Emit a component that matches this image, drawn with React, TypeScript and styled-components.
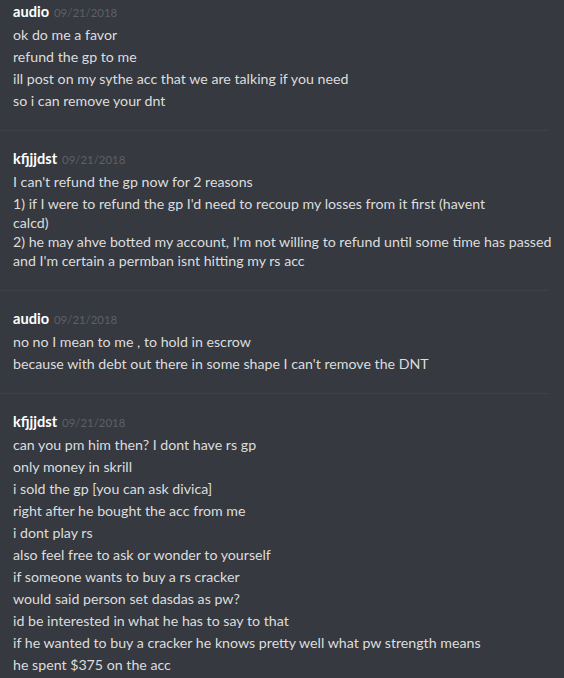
import React from 'react';
import styled, { createGlobalStyle } from 'styled-components';

type Group = {
  author: string;
  time: string;
  messages: string[];
};

const groups: Group[] = [
  {
    author: 'audio',
    time: '09/21/2018',
    messages: [
      'ok do me a favor',
      'refund the gp to me',
      'ill post on my sythe acc that we are talking if you need',
      'so i can remove your dnt',
    ],
  },
  {
    author: 'kfjjjdst',
    time: '09/21/2018',
    messages: [
      "I can't refund the gp now for 2 reasons",
      "1) if I were to refund the gp I'd need to recoup my losses from it first (havent\ncalcd)\n2) he may ahve botted my account, I'm not willing to refund until some time has passed\nand I'm certain a permban isnt hitting my rs acc",
    ],
  },
  {
    author: 'audio',
    time: '09/21/2018',
    messages: [
      'no no I mean to me , to hold in escrow',
      "because with debt out there in some shape I can't remove the DNT",
    ],
  },
  {
    author: 'kfjjjdst',
    time: '09/21/2018',
    messages: [
      "can you pm him then? I dont have rs gp",
      'only money in skrill',
      'i sold the gp [you can ask divica]',
      'right after he bought the acc from me',
      'i dont play rs',
      'also feel free to ask or wonder to yourself',
      'if someone wants to buy a rs cracker',
      'would said person set dasdas as pw?',
      'id be interested in what he has to say to that',
      'if he wanted to buy a cracker he knows pretty well what pw strength means',
      'he spent $375 on the acc',
    ],
  },
];

const App: React.FC = () => {
  return (
    <>
      <GlobalStyle />
      <Chat>
        {groups.map((group, i) => (
          <MessageGroup key={i}>
            <Header>
              <Author>{group.author}</Author>
              <Timestamp>{group.time}</Timestamp>
            </Header>
            {group.messages.map((text, j) => (
              <Message key={j}>{text}</Message>
            ))}
          </MessageGroup>
        ))}
      </Chat>
    </>
  );
};

const GlobalStyle = createGlobalStyle`
  html, body {
    margin: 0;
    padding: 0;
    background: #36393f;
    overflow: hidden;
    min-height: 100vh;
  }
  body {
    font-family: Lato, "Noto Sans", sans-serif;
    -webkit-font-smoothing: antialiased;
  }
`;

const Chat = styled.div`
  display: flex;
  flex-direction: column;
  margin-top: -17px;
  padding-right: 15px;
`;

const MessageGroup = styled.div`
  border-top: 1px solid #3e4147;
  padding: 17px 0 20px 13px;
`;

const Header = styled.div`
  display: flex;
  align-items: baseline;
  height: 21px;
  line-height: 21px;
`;

const Author = styled.span`
  font-size: 14.6px;
  font-weight: 700;
  color: #ffffff;
`;

const Timestamp = styled.span`
  margin-left: 5px;
  font-size: 11.4px;
  color: #5d6066;
`;

const Message = styled.div`
  margin-top: 3px;
  font-size: 14.2px;
  line-height: 19px;
  color: #dcddde;
  white-space: pre;
`;

export default App;
